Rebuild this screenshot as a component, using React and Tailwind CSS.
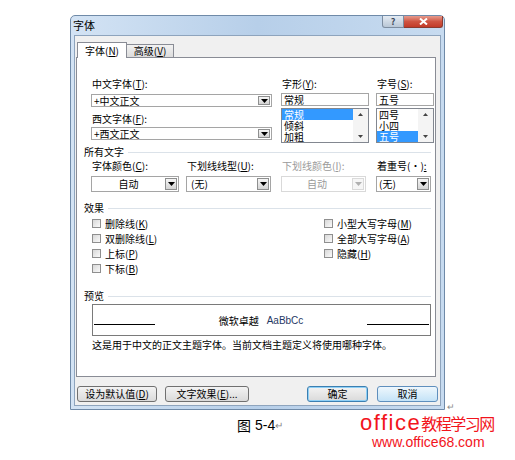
import React from "react";

function U({ children }) {
  return <span className="underline">{children}</span>;
}

function Tri({ color = "#000" }) {
  return (
    <svg width="7" height="4" viewBox="0 0 7 4">
      <path d="M0 0H7L3.5 4Z" fill={color} />
    </svg>
  );
}

function TriUp({ color = "#444" }) {
  return (
    <svg width="5" height="3" viewBox="0 0 5 3">
      <path d="M0 3H5L2.5 0Z" fill={color} />
    </svg>
  );
}

function TriDown({ color = "#444" }) {
  return (
    <svg width="5" height="3" viewBox="0 0 5 3">
      <path d="M0 0H5L2.5 3Z" fill={color} />
    </svg>
  );
}

function DropBtn({ disabled }) {
  return (
    <div
      className={
        disabled
          ? "my-px mr-px flex w-[12px] shrink-0 items-center justify-center border border-[#dadada] bg-[#f6f6f6]"
          : "my-px mr-px flex w-[12px] shrink-0 items-center justify-center border border-[#8e8f8f] bg-gradient-to-b from-[#f6f6f6] to-[#d4d4d4]"
      }
    >
      <Tri color={disabled ? "#b0b0b0" : "#000"} />
    </div>
  );
}

function Label({ children, gray }) {
  return (
    <div className={gray ? "h-[12px] pl-px text-[10px] leading-[12px] text-[#9a9a9a]" : "h-[12px] pl-px text-[10px] leading-[12px]"}>
      {children}
    </div>
  );
}

function Check({ children }) {
  return (
    <div className="flex h-[15px] items-center gap-[4px]">
      <span className="h-[9px] w-[9px] shrink-0 border border-[#8f8f8f] bg-gradient-to-br from-[#d8d8d8] to-[#fafafa]" />
      <span className="text-[10px] leading-[12px]">{children}</span>
    </div>
  );
}

function GroupHead({ children, className }) {
  return (
    <div className={"flex h-[12px] items-center " + className}>
      <span className="text-[10px] leading-[12px]">{children}</span>
      <div className="ml-[4px] mr-[4px] h-px flex-1 bg-[#dbe2e9]" />
    </div>
  );
}

function ListBox({ items, sel }) {
  return (
    <div className="mt-[2px] flex h-[35px] border border-[#828790] bg-white">
      <div className="flex-1">
        {items.map((t, i) => (
          <div
            key={t}
            className={
              i === sel
                ? "flex h-[11px] items-center bg-[#3399ff] pl-[2px] text-[10px] leading-[11px] text-white"
                : "flex h-[11px] items-center pl-[2px] text-[10px] leading-[11px]"
            }
          >
            {t}
          </div>
        ))}
      </div>
      <div className="flex w-[15px] flex-col items-center justify-between bg-[#f4f4f4] py-[4px]">
        <TriUp />
        <TriDown />
      </div>
    </div>
  );
}

function Btn({ children, className }) {
  return (
    <div
      className={
        "flex h-[16px] items-center justify-center rounded-[3px] border text-[10px] leading-[12px] " + className
      }
    >
      {children}
    </div>
  );
}

export default function App() {
  return (
    <div className="relative h-[460px] w-[515px] overflow-hidden bg-white font-['Noto_Sans_CJK_SC','Liberation_Sans',sans-serif] text-black">
      <div className="flex items-end">
        <div className="ml-[70px] mt-[15px] flex h-[395px] w-[375px] flex-col rounded-t-[5px] border border-[#6f8aa8] bg-gradient-to-r from-[#d3e3f4] via-[#b7cfe9] to-[#c7dbf0]">
          {/* title bar */}
          <div className="flex h-[19px] items-start">
            <span className="ml-[2px] mt-[2px] text-[11px] leading-[14px]">字体</span>
            <div className="ml-auto mr-px flex">
              <div className="flex h-[12px] w-[22px] items-center justify-center rounded-bl-[3px] border border-t-0 border-[#7d8da0] bg-gradient-to-b from-[#e4ebf3] to-[#b9c7d6] text-[9px] font-bold leading-[10px] text-[#3c4a5c]">
                ?
              </div>
              <div className="flex h-[12px] w-[39px] items-center justify-center rounded-br-[3px] border border-l-0 border-t-0 border-[#8a3a30] bg-gradient-to-b from-[#e59a8d] via-[#cf5442] to-[#c23a28]">
                <svg width="9" height="7" viewBox="0 0 9 7">
                  <path d="M1 0.5L8 6.5M8 0.5L1 6.5" stroke="#fff" strokeWidth="2" />
                </svg>
              </div>
            </div>
          </div>

          {/* content */}
          <div className="mx-[3px] mb-[3px] flex flex-1 flex-col border border-[#8ea4bd] bg-[#f0f0f0] pl-[1px] pt-[6px]">
            {/* tabs */}
            <div className="flex h-[15px] items-end pl-[1px]">
              <div className="relative z-10 -mb-px flex h-[16px] w-[50px] items-center justify-center border border-b-0 border-[#898c95] bg-white text-[10px] leading-[12px]">
                字体(<U>N</U>)
              </div>
              <div className="flex h-[13px] w-[47px] items-center justify-center border border-b-0 border-l-0 border-[#898c95] bg-gradient-to-b from-[#f2f2f2] to-[#dcdcdc] text-[10px] leading-[12px]">
                高级(<U>V</U>)
              </div>
            </div>

            {/* panel */}
            <div className="flex h-[320px] w-[360px] flex-col border border-[#898c95] bg-white pl-[7px]">
              {/* top font row */}
              <div className="ml-[7px] mt-[20px] flex">
                <div className="flex w-[181px] flex-col">
                  <Label>
                    中文字体(<U>T</U>):
                  </Label>
                  <div className="mt-[4px] flex h-[13px] border border-[#a5a5a5] bg-white">
                    <span className="flex-1 pl-[2px] text-[10px] leading-[11px]">+中文正文</span>
                    <DropBtn />
                  </div>
                  <div className="mt-[6px]">
                    <Label>
                      西文字体(<U>F</U>):
                    </Label>
                  </div>
                  <div className="mt-[2px] flex h-[13px] border border-[#a5a5a5] bg-white">
                    <span className="flex-1 pl-[2px] text-[10px] leading-[11px]">+西文正文</span>
                    <DropBtn />
                  </div>
                </div>
                <div className="ml-[9px] flex w-[88px] flex-col">
                  <Label>
                    字形(<U>Y</U>):
                  </Label>
                  <div className="mt-[3px] h-[13px] border border-[#a5a5a5] bg-white pl-[2px] text-[10px] leading-[11px]">
                    常规
                  </div>
                  <ListBox items={["常规", "倾斜", "加粗"]} sel={0} />
                </div>
                <div className="ml-[7px] flex w-[58px] flex-col">
                  <Label>
                    字号(<U>S</U>):
                  </Label>
                  <div className="mt-[3px] h-[13px] border border-[#a5a5a5] bg-white pl-[2px] text-[10px] leading-[11px]">
                    五号
                  </div>
                  <ListBox items={["四号", "小四", "五号"]} sel={2} />
                </div>
              </div>

              {/* all text */}
              <GroupHead className="mt-[3px]">所有文字</GroupHead>
              <div className="ml-[7px] mt-[2px] flex">
                <div className="flex w-[88px] flex-col">
                  <Label>
                    字体颜色(<U>C</U>):
                  </Label>
                  <div className="mt-[4px] flex h-[16px] border border-[#a5a5a5] bg-white">
                    <span className="flex-1 text-center text-[10px] leading-[14px]">自动</span>
                    <DropBtn />
                  </div>
                </div>
                <div className="ml-[7px] flex w-[85px] flex-col">
                  <Label>
                    下划线线型(<U>U</U>):
                  </Label>
                  <div className="mt-[4px] flex h-[16px] border border-[#a5a5a5] bg-white">
                    <span className="flex-1 pl-[4px] text-[10px] leading-[14px]">(无)</span>
                    <DropBtn />
                  </div>
                </div>
                <div className="ml-[10px] flex w-[85px] flex-col">
                  <Label gray>
                    下划线颜色(<U>I</U>):
                  </Label>
                  <div className="mt-[4px] flex h-[16px] border border-[#d9d9d9] bg-white">
                    <span className="flex-1 text-center text-[10px] leading-[14px] text-[#9a9a9a]">自动</span>
                    <DropBtn disabled />
                  </div>
                </div>
                <div className="ml-[10px] flex w-[55px] flex-col">
                  <Label>
                    着重号(·)<U>:</U>
                  </Label>
                  <div className="mt-[4px] flex h-[16px] border border-[#a5a5a5] bg-white">
                    <span className="flex-1 pl-[2px] text-[10px] leading-[14px]">(无)</span>
                    <DropBtn />
                  </div>
                </div>
              </div>

              {/* effects */}
              <GroupHead className="mt-[10px]">效果</GroupHead>
              <div className="ml-[8px] mt-[2px] flex">
                <div className="flex w-[232px] flex-col">
                  <Check>
                    删除线(<U>K</U>)
                  </Check>
                  <Check>
                    双删除线(<U>L</U>)
                  </Check>
                  <Check>
                    上标(<U>P</U>)
                  </Check>
                  <Check>
                    下标(<U>B</U>)
                  </Check>
                </div>
                <div className="flex flex-col">
                  <Check>
                    小型大写字母(<U>M</U>)
                  </Check>
                  <Check>
                    全部大写字母(<U>A</U>)
                  </Check>
                  <Check>
                    隐藏(<U>H</U>)
                  </Check>
                </div>
              </div>

              {/* preview */}
              <GroupHead className="mt-[14px]">预览</GroupHead>
              <div className="ml-[8px] mr-[4px] mt-[2px] flex h-[32px] border border-[#7a7a7a] bg-white pt-[9px]">
                <div className="ml-px mt-[10px] h-px w-[61px] bg-black" />
                <div className="flex flex-1 justify-center gap-[8px] text-[10px] leading-[14px]">
                  <span>微软卓越</span>
                  <span className="font-['Liberation_Sans',sans-serif] text-[#1f3864]">AaBbCc</span>
                </div>
                <div className="mr-px mt-[10px] h-px w-[62px] bg-black" />
              </div>
              <div className="ml-[8px] mt-[3px] text-[10px] leading-[12px]">
                这是用于中文的正文主题字体。当前文档主题定义将使用哪种字体。
              </div>
            </div>

            {/* buttons */}
            <div className="mt-[9px] flex pl-[1px] pr-[2px]">
              <Btn className="w-[80px] border-[#707070] bg-gradient-to-b from-[#f3f3f3] to-[#dadada]">
                设为默认值(<U>D</U>)
              </Btn>
              <Btn className="ml-[8px] w-[84px] border-[#707070] bg-gradient-to-b from-[#f3f3f3] to-[#dadada]">
                文字效果(<U>E</U>)...
              </Btn>
              <Btn className="ml-auto w-[61px] border-[#3c7fb1] bg-gradient-to-b from-[#f3f3f3] to-[#dadada] shadow-[inset_0_0_0_1px_#8fd0f6]">
                确定
              </Btn>
              <Btn className="ml-[9px] w-[61px] border-[#5f8fbd] bg-gradient-to-b from-[#eef7fd] to-[#c4e3f7]">
                取消
              </Btn>
            </div>
          </div>
        </div>
        <span className="mb-[-2px] ml-[2px] text-[9px] leading-[10px] text-[#8a8a8a]">↵</span>
      </div>

      <div className="ml-[237px] mt-[7px] flex items-center text-[14px] leading-[16px]">
        <span>图</span>
        <span className="ml-[4px] font-['Liberation_Sans',sans-serif]">5-4</span>
        <span className="text-[10px] text-[#8a8a8a]">↵</span>
      </div>

      {/* watermark */}
      <div className="absolute left-[360px] top-[411px] flex items-baseline text-[#f2141c]">
        <span className="font-['Liberation_Sans',sans-serif] text-[22px] leading-[24px] tracking-[1.5px]">office</span>
        <span className="text-[16px] leading-[24px] tracking-[-1.5px]">教程学习网</span>
      </div>
      <div className="absolute left-[372px] top-[434px] font-['Liberation_Sans',sans-serif] text-[14px] leading-[16px] text-[#f2141c]">
        www.office68.com
      </div>
    </div>
  );
}
